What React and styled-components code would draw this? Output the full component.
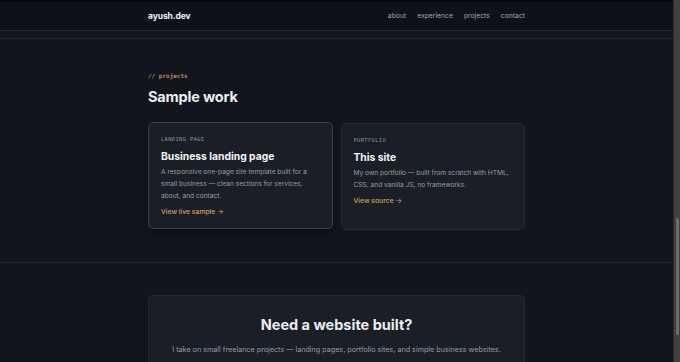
import React from 'react'
import styled, { createGlobalStyle } from 'styled-components'

let GlobalStyle = createGlobalStyle`
  html, body {
    margin: 0;
    padding: 0;
    height: 100%;
    overflow: hidden;
    background: #12151d;
  }
  #root {
    height: 100%;
  }
  * {
    box-sizing: border-box;
  }
`

let Shell = styled.div`
  display: flex;
  height: 100vh;
  font-family: Inter, 'Liberation Sans', sans-serif;
  color: #e6e7ea;
`

let Page = styled.div`
  flex: 1;
  display: flex;
  flex-direction: column;
  background: #12151d;
  min-width: 0;
  overflow: hidden;
`

let Container = styled.div`
  width: 377px;
  margin: 0 auto;
`

let Header = styled.header`
  flex: none;
  height: 31px;
  border-top: 2px solid #07080b;
  border-bottom: 1px solid #22262e;
  background: #0f1118;
`

let HeaderRow = styled(Container)`
  height: 100%;
  display: flex;
  align-items: center;
  justify-content: space-between;
  padding-bottom: 1px;
`

let Logo = styled.span`
  font-size: 8.5px;
  font-weight: 700;
  letter-spacing: -0.1px;
  color: #f1f2f4;
`

let Nav = styled.nav`
  display: flex;
  gap: 11px;
`

let NavLink = styled.span`
  font-size: 6.8px;
  color: #a0a4ab;
`

let SectionTail = styled.div`
  flex: none;
  height: 8px;
  border-bottom: 1px solid #22262e;
`

let Section = styled.section`
  flex: none;
  padding: ${p => p.$top}px 0 ${p => p.$bottom}px;
  border-bottom: ${p => (p.$divider ? '1px solid #22262e' : 'none')};
`

let Eyebrow = styled.div`
  font-family: 'DejaVu Sans Mono', 'Liberation Mono', monospace;
  font-size: 6px;
  font-weight: 700;
  line-height: 8px;
  color: #bf8c57;
`

let Heading = styled.h2`
  margin: 8px 0 0;
  font-size: 14.5px;
  line-height: 18px;
  font-weight: 700;
  letter-spacing: -0.2px;
  color: #eceef0;
`

let Grid = styled.div`
  margin-top: 17px;
  display: grid;
  grid-template-columns: 1fr 1fr;
  gap: 8px;
`

let Card = styled.article`
  display: flex;
  flex-direction: column;
  padding: 13px 12px 11px 12px;
  background: #1a1f27;
  border: 1px solid ${p => (p.$hover ? '#3a3f48' : '#262b34')};
  border-radius: 5px;
  transform: translateY(${p => (p.$hover ? '-1px' : '0')});
  box-shadow: ${p => (p.$hover ? '0 4px 10px rgba(0,0,0,0.35)' : 'none')};
`

let Tag = styled.span`
  font-family: 'DejaVu Sans Mono', 'Liberation Mono', monospace;
  font-size: 5.5px;
  line-height: 7px;
  letter-spacing: 0.3px;
  color: #7e9e80;
`

let CardTitle = styled.h3`
  margin: 7px 0 0;
  font-size: 10.3px;
  line-height: 13px;
  font-weight: 700;
  color: #f3f4f6;
`

let CardText = styled.p`
  margin: 3px 0 0;
  font-size: 6.6px;
  line-height: 12px;
  color: #979ca5;
`

let CardLink = styled.span`
  margin-top: 5px;
  font-size: 6.8px;
  line-height: 10px;
  font-weight: 500;
  color: #d29f5f;
`

let Cta = styled.div`
  padding: 20px 16px 24px;
  background: #1a1f27;
  border: 1px solid #242932;
  border-radius: 5px;
  text-align: center;
`

let CtaTitle = styled.h2`
  margin: 0;
  font-size: 14.5px;
  line-height: 18px;
  font-weight: 700;
  color: #eceef0;
`

let CtaText = styled.p`
  margin: 10px 0 0;
  font-size: 7.2px;
  line-height: 12px;
  color: #979ca5;
`

let Scrollbar = styled.div`
  width: 7px;
  flex: none;
  background: #404040;
  border-left: 1px solid #2c2c2c;
  display: flex;
  justify-content: center;
`

let Thumb = styled.div`
  width: 3px;
  height: ${p => p.$height}px;
  margin-top: ${p => p.$offset}px;
  border-radius: 2px;
  background: #6c6c6c;
`

let projects = [
  {
    tag: `LANDING PAGE`,
    title: `Business landing page`,
    text: `A responsive one-page site template built for a small business — clean sections for services, about, and contact.`,
    link: `View live sample →`,
    hover: true,
  },
  {
    tag: `PORTFOLIO`,
    title: `This site`,
    text: `My own portfolio — built from scratch with HTML, CSS, and vanilla JS, no frameworks.`,
    link: `View source →`,
  },
]

let App = () => (
  <Shell>
    <GlobalStyle />
    <Page>
      <Header>
        <HeaderRow>
          <Logo>ayush.dev</Logo>
          <Nav>
            <NavLink>about</NavLink>
            <NavLink>experience</NavLink>
            <NavLink>projects</NavLink>
            <NavLink>contact</NavLink>
          </Nav>
        </HeaderRow>
      </Header>
      <SectionTail />
      <Section $top={33} $bottom={32} $divider>
        <Container>
          <Eyebrow>// projects</Eyebrow>
          <Heading>Sample work</Heading>
          <Grid>
            {projects.map(p => (
              <Card key={p.title} $hover={p.hover}>
                <Tag>{p.tag}</Tag>
                <CardTitle>{p.title}</CardTitle>
                <CardText>{p.text}</CardText>
                <CardLink>{p.link}</CardLink>
              </Card>
            ))}
          </Grid>
        </Container>
      </Section>
      <Section $top={32} $bottom={40}>
        <Container>
          <Cta>
            <CtaTitle>Need a website built?</CtaTitle>
            <CtaText>I take on small freelance projects — landing pages, portfolio sites, and simple business websites.</CtaText>
          </Cta>
        </Container>
      </Section>
    </Page>
    <Scrollbar>
      <Thumb $offset={218} $height={117} />
    </Scrollbar>
  </Shell>
)

export default App
